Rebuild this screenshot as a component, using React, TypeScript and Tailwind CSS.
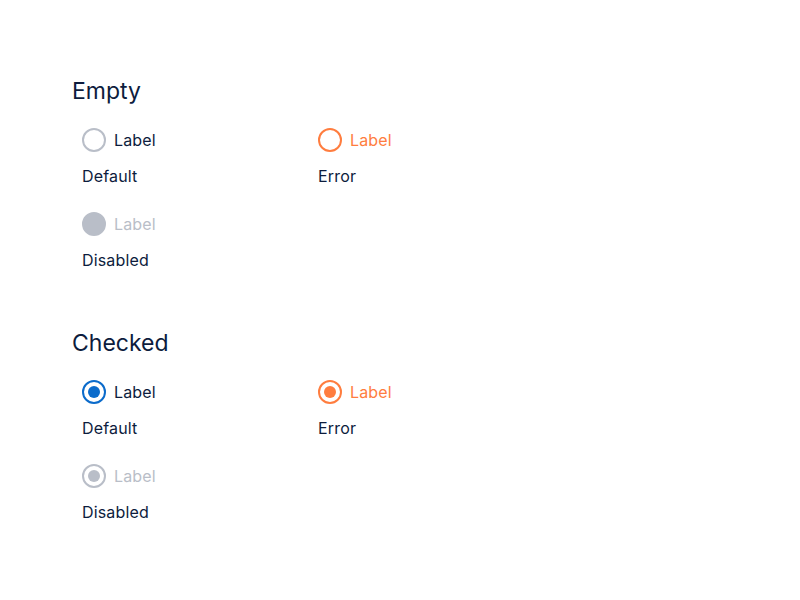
import * as React from 'react';

type Variant = 'default' | 'error' | 'disabled';

const circleClass: Record<Variant, string> = {
  default: 'border-[#b9bec8] bg-white',
  error: 'border-[#ff7d3f] bg-white',
  disabled: 'border-[#b9bec8] bg-[#b9bec8]',
};

const checkedClass: Record<Variant, string> = {
  default: 'border-[#0b6bcb]',
  error: 'border-[#ff7d3f]',
  disabled: 'border-[#b9bec8]',
};

const dotClass: Record<Variant, string> = {
  default: 'bg-[#0b6bcb]',
  error: 'bg-[#ff7d3f]',
  disabled: 'bg-[#b9bec8]',
};

const labelClass: Record<Variant, string> = {
  default: 'text-[#0d1c3d]',
  error: 'text-[#ff7d3f]',
  disabled: 'text-[#b9bec8]',
};

function Radio({variant, checked}: {variant: Variant; checked: boolean}) {
  return (
    <div className="flex flex-col">
      <label className="flex h-6 items-center gap-2">
        {checked ? (
          <span
            className={`flex h-6 w-6 items-center justify-center rounded-full border-2 bg-white ${checkedClass[variant]}`}
          >
            <span className={`h-3 w-3 rounded-full ${dotClass[variant]}`} />
          </span>
        ) : (
          <span className={`h-6 w-6 rounded-full border-2 ${circleClass[variant]}`} />
        )}
        <span className={`text-[16px] leading-5 tracking-[0.01em] ${labelClass[variant]}`}>
          Label
        </span>
      </label>
      <span className="mt-[14px] text-[16px] leading-5 tracking-[0.01em] text-[#0d1c3d]">
        {variant === 'default' ? 'Default' : variant === 'error' ? 'Error' : 'Disabled'}
      </span>
    </div>
  );
}

function Group({title, checked}: {title: string; checked: boolean}) {
  return (
    <section>
      <h2 className="text-[23px] leading-7 text-[#0d1c3d]">{title}</h2>
      <div className="mt-[23px] grid grid-cols-[236px_236px] gap-y-[26px] pl-[10px]">
        <Radio variant="default" checked={checked} />
        <Radio variant="error" checked={checked} />
        <Radio variant="disabled" checked={checked} />
      </div>
    </section>
  );
}

export default function App() {
  return (
    <main
      className="flex min-h-[600px] flex-col gap-[59px] bg-white pl-[72px] pt-[77px]"
      style={{fontFamily: 'Inter, "Noto Sans", sans-serif'}}
    >
      <Group title="Empty" checked={false} />
      <Group title="Checked" checked />
    </main>
  );
}
